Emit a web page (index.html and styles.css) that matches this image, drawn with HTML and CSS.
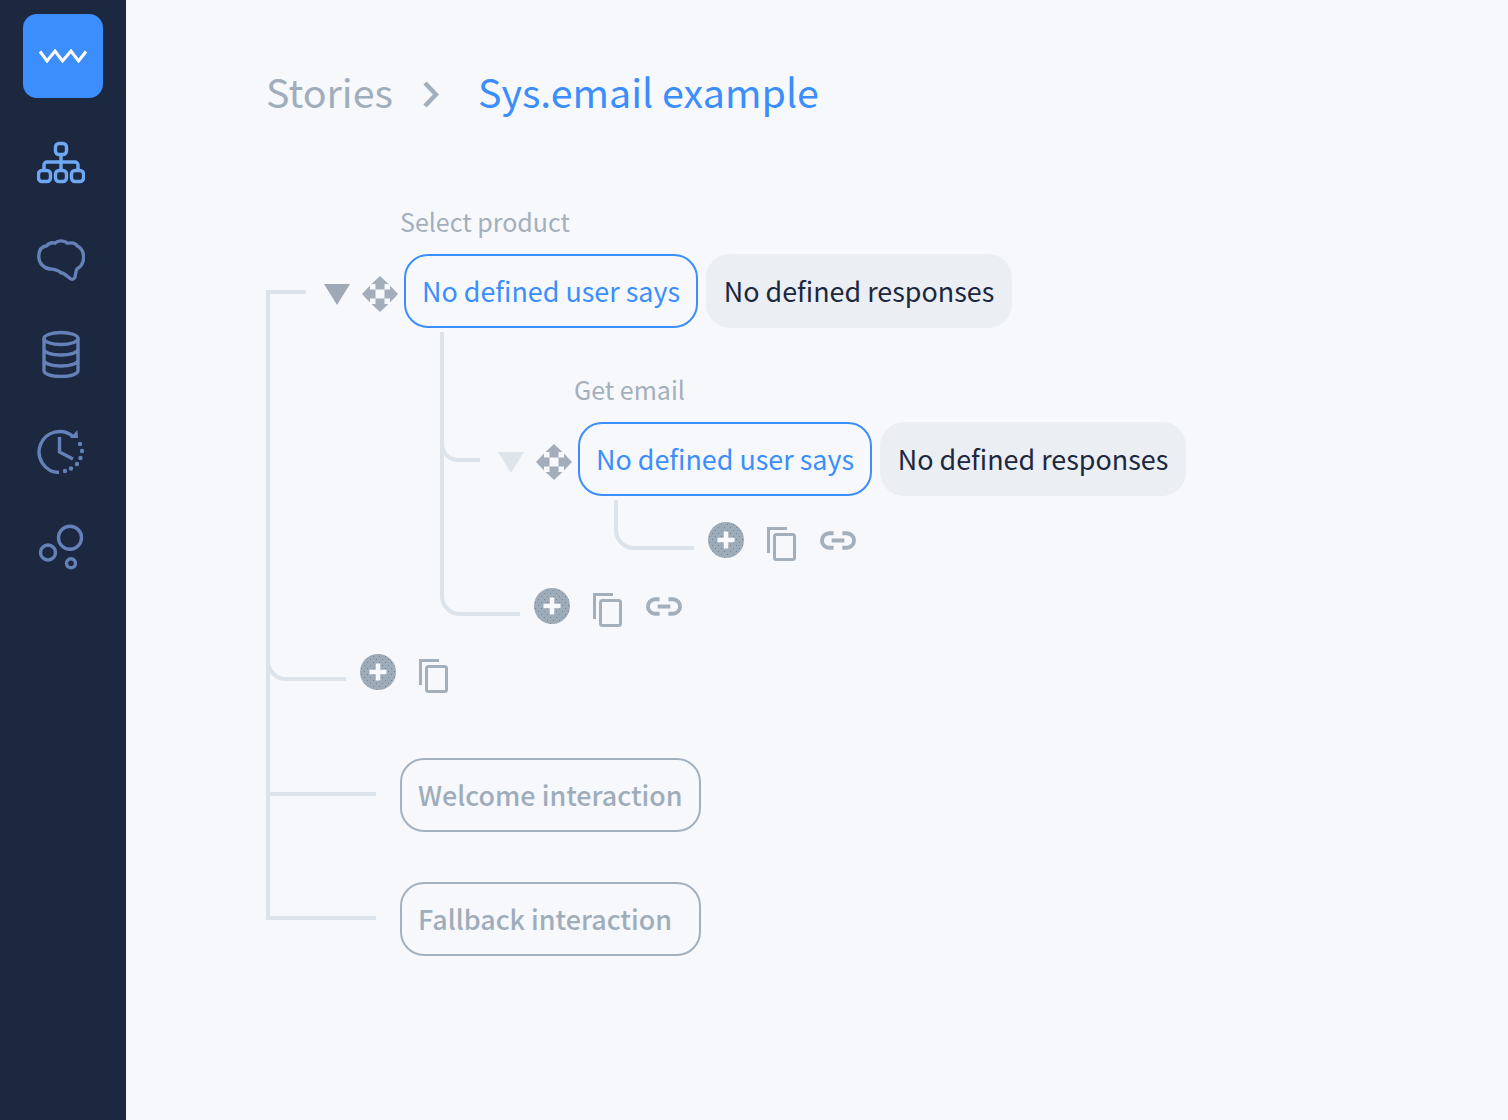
FILE: index.html

```html
<!DOCTYPE html>
<html lang="en">
<head>
  <meta charset="UTF-8" />
  <title>Sys.email example</title>
  <link rel="stylesheet" href="styles.css">
</head>
<body>

  <svg class="defs" width="0" height="0" aria-hidden="true">
    <defs>
      <pattern id="grain" width="6" height="6" patternUnits="userSpaceOnUse">
        <rect width="6" height="6" fill="#9eabb8"/>
        <rect x="1" y="2" width="1" height="1" fill="#77838f"/>
        <rect x="4" y="5" width="1" height="1" fill="#77838f"/>
      </pattern>
      <symbol id="i-tri" viewBox="0 0 26 21">
        <path d="M0 0H26L13 21Z"/>
      </symbol>
      <symbol id="i-move" viewBox="0 0 36 36">
        <path d="M18 0L26.500 8H22.500V13.500H13.500V8H9.500Z"/>
        <path d="M18 36L9.500 28H13.500V22.500H22.500V28H26.500Z"/>
        <path d="M0 18L8 9.500V13.500H13.500V22.500H8V26.500Z"/>
        <path d="M36 18L28 26.500V22.500H22.500V13.500H28V9.500Z"/>
      </symbol>
      <symbol id="i-plus" viewBox="0 0 36 36">
        <circle cx="18" cy="18" r="18" fill="url(#grain)"/>
        <path d="M18 9.500V26.500M9.500 18H26.500" stroke="#f7f9fd" stroke-width="4.500" fill="none"/>
      </symbol>
      <symbol id="i-copy" viewBox="0 0 29 34">
        <path d="M1.500 26V1.500H20" fill="none" stroke="currentColor" stroke-width="3"/>
        <rect x="7.500" y="7.500" width="20" height="25" rx="2" fill="none" stroke="currentColor" stroke-width="3"/>
      </symbol>
      <symbol id="i-link" viewBox="0 0 37 19">
        <path d="M14 2H9.500a7.500 7.500 0 0 0 0 15H14M23 2H27.500a7.500 7.500 0 0 1 0 15H23M12 9.500H25" fill="none" stroke="currentColor" stroke-width="4"/>
      </symbol>
    </defs>
  </svg>

  <div class="page">
    <nav class="sidebar">
      <a class="logo">
        <svg width="48" height="14" viewBox="0 0 48 14"><path d="M1 2.500L8 12L16 2L23.500 12L32 2L39.500 12L47 2.500" fill="none" stroke="#fff" stroke-width="3"/></svg>
      </a>
      <div class="nav-icons">
        <svg class="nav-icon active" viewBox="0 0 48 48">
          <rect x="18.500" y="5.500" width="11" height="11" rx="3.500"/>
          <rect x="1.500" y="32.500" width="12" height="11" rx="3.500"/>
          <rect x="18.500" y="32.500" width="11" height="11" rx="3.500"/>
          <rect x="34.500" y="32.500" width="12" height="11" rx="3.500"/>
          <path d="M24 17V32M7 32V27a3 3 0 0 1 3-3H38a3 3 0 0 1 3 3V32"/>
        </svg>
        <svg class="nav-icon" viewBox="0 0 48 48">
          <path d="M1.800 22.500C1.800 16 5 12.500 9.500 11.800C12 9 15 8 18 9.200C20.500 6.500 27 5.800 30.500 9.200C34 8.500 38.500 9 40.500 12C44.500 14 46.800 19 46.500 24.500C46.300 29 44 32.500 40 35C38.500 37 38.800 41 37.800 43.500C36.500 46 34.500 45.800 32.500 44C29.500 41.500 27 39 24 38.800C20.500 35.500 17 35.500 13.500 35C8 34.800 1.800 30 1.800 22.500Z"/>
        </svg>
        <svg class="nav-icon" viewBox="0 0 48 48">
          <ellipse cx="24" cy="8.500" rx="17" ry="6"/>
          <path d="M7 8.500V40.500c0 3.500 7.500 6 17 6s17-2.500 17-6V8.500M7 19c0 3.500 7.500 6 17 6s17-2.500 17-6M7 30c0 3.500 7.500 6 17 6s17-2.500 17-6"/>
        </svg>
        <svg class="nav-icon" viewBox="0 0 48 48">
          <path d="M22 45.500A20.500 20.500 0 1 1 36 9.500M22.500 10V25L36 32"/>
          <path class="solid" d="M40.500 3L41 11H33Z"/>
          <circle class="solid" cx="43" cy="17" r="2.200"/>
          <circle class="solid" cx="45" cy="24" r="2.200"/>
          <circle class="solid" cx="43.500" cy="31" r="2.200"/>
          <circle class="solid" cx="40" cy="37" r="2.200"/>
          <circle class="solid" cx="34" cy="41.500" r="2.200"/>
          <circle class="solid" cx="28" cy="44" r="2.200"/>
        </svg>
        <svg class="nav-icon" viewBox="0 0 48 48">
          <circle cx="33" cy="14.700" r="11.500"/>
          <circle cx="11" cy="29.500" r="7.500"/>
          <circle cx="34" cy="40.300" r="4.500"/>
        </svg>
      </div>
    </nav>

    <main class="content">
      <h1 class="crumbs">
        <span class="crumb">Stories</span>
        <svg class="crumb-sep" width="16" height="27" viewBox="0 0 16 27"><path d="M2 2L13 13.500L2 25" fill="none" stroke="#a3afbb" stroke-width="4.500"/></svg>
        <span class="crumb current">Sys.email example</span>
      </h1>

      <div class="tree">
        <svg class="lines" width="800" height="760" viewBox="0 0 800 760">
          <path d="M40 86H2V712H110"/>
          <path d="M2 455a18 18 0 0 0 18 18H80"/>
          <path d="M2 588H110"/>
          <path d="M176 126V390a18 18 0 0 0 18 18H254"/>
          <path d="M176 238a16 16 0 0 0 16 16H214"/>
          <path d="M350 294V324a18 18 0 0 0 18 18H428"/>
        </svg>

        <div class="branch">
          <div class="intent-name">Select product</div>
          <div class="intent">
            <div class="tools">
              <svg class="tri"><use href="#i-tri"/></svg>
              <svg class="move"><use href="#i-move"/></svg>
            </div>
            <div class="says">No defined user says</div>
            <div class="responses">No defined responses</div>
          </div>

          <div class="branch nested first">
            <div class="intent-name">Get email</div>
            <div class="intent">
              <div class="tools">
                <svg class="tri faded"><use href="#i-tri"/></svg>
                <svg class="move"><use href="#i-move"/></svg>
              </div>
              <div class="says">No defined user says</div>
              <div class="responses">No defined responses</div>
            </div>

            <div class="actions deep">
              <svg class="plus"><use href="#i-plus"/></svg>
              <svg class="copy"><use href="#i-copy"/></svg>
              <svg class="link"><use href="#i-link"/></svg>
            </div>
          </div>

          <div class="actions nested-actions">
            <svg class="plus"><use href="#i-plus"/></svg>
            <svg class="copy"><use href="#i-copy"/></svg>
            <svg class="link"><use href="#i-link"/></svg>
          </div>
        </div>

        <div class="actions root-actions">
          <svg class="plus"><use href="#i-plus"/></svg>
          <svg class="copy"><use href="#i-copy"/></svg>
        </div>

        <div class="fixed-node welcome">Welcome interaction</div>
        <div class="fixed-node fallback">Fallback interaction</div>
      </div>
    </main>
  </div>

</body>
</html>
```

FILE: styles.css

```css
* { box-sizing: border-box; }
html, body { margin: 0; height: 100%; }
body { font-family: "Noto Sans CJK SC", "Source Sans Pro", "Noto Sans", sans-serif; background: #f6f8fc; overflow: hidden; }
.defs { position: absolute; }
.page { display: flex; height: 1120px; }

.sidebar { width: 126px; flex: none; background: #1c2740; padding-top: 14px; }
.logo { display: flex; align-items: center; justify-content: center; width: 80px; height: 84px; margin-left: 23px; background: #3b8efb; border-radius: 14px; }
.nav-icons { display: flex; flex-direction: column; gap: 48.200px; margin: 40px 0 0 37px; }
.nav-icon { width: 48px; height: 48px; fill: none; stroke: #6481b8; stroke-width: 3.400; }
.nav-icon.active { stroke: #6ea8f2; }
.nav-icon .solid { fill: #6481b8; stroke: none; }

.content { flex: 1; padding: 60px 0 0 140px; }
.crumbs { display: flex; align-items: center; height: 60px; margin: 0 0 86px; font-size: 39.400px; font-weight: 400; }
.crumb { color: #a0aebc; }
.crumb.current { color: #3b8efb; }
.crumb-sep { margin: 8px 39px 0 30px; }

.tree { position: relative; padding-left: 58px; color: #a3afbb; }
.lines { position: absolute; left: 0; top: 0; fill: none; stroke: #dde3ea; stroke-width: 4; }

.intent-name { height: 34px; line-height: 30px; margin: 0 0 14px 76px; font-size: 25px; color: #a3afbb; }
.intent { display: flex; align-items: stretch; height: 74px; }
.tools { display: flex; align-items: center; gap: 12px; height: 36px; margin: 22px 6px 0 0; }
.tri { width: 26px; height: 21px; fill: #9fa9b5; }
.tri.faded { fill: #dfe4ea; }
.move { width: 36px; height: 36px; fill: #a3aeba; }

.says, .responses { display: flex; align-items: center; justify-content: center; padding-bottom: 1px; font-size: 26.900px; border-radius: 24px; }
.says { width: 294px; border: 2px solid #3b8efb; color: #3b8efb; }
.responses { width: 306px; margin-left: 8px; background: #ebeef3; color: #1c2740; }

.nested { margin-left: 174px; }
.first { margin-top: 46px; }

.actions { display: flex; align-items: flex-start; height: 36px; color: #a3afbb; }
.plus { width: 36px; height: 36px; }
.copy { width: 29px; height: 34px; margin: 5px 0 0 23px; }
.link { width: 36px; height: 19px; margin: 9px 0 0 24px; }
.deep { margin: 26px 0 0 210px; }
.nested-actions { margin: 30px 0 0 210px; }
.root-actions { margin: 30px 0 0 36px; }

.fixed-node { display: flex; align-items: center; width: 301px; height: 74px; margin-left: 76px; padding: 0 0 1px 16px; border: 2px solid #a3b1bf; border-radius: 24px; font-size: 26.900px; font-weight: 500; color: #9fadbb; }
.welcome { margin-top: 68px; }
.fallback { margin-top: 50px; }
```
